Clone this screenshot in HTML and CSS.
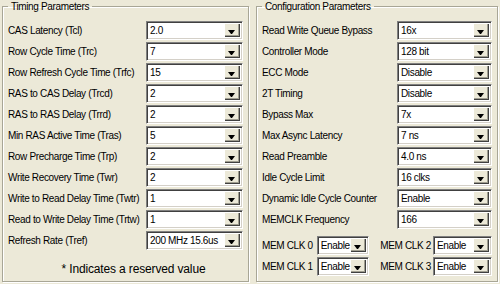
FILE: index.html
```html
<!DOCTYPE html>
<html lang="en">
<head>
  <meta charset="UTF-8">
  <title>Memory Settings</title>
  <link rel="stylesheet" href="styles.css">
</head>
<body>
  <div class="dialogo">
    <fieldset class="grupo grupo-timing">
      <legend>Timing Parameters</legend>
      <div class="fila"><span>CAS Latency (Tcl)</span><div class="combo"><span class="valor">2.0</span><span class="boton"></span></div></div>
      <div class="fila"><span>Row Cycle Time (Trc)</span><div class="combo"><span class="valor">7</span><span class="boton"></span></div></div>
      <div class="fila"><span>Row Refresh Cycle Time (Trfc)</span><div class="combo"><span class="valor">15</span><span class="boton"></span></div></div>
      <div class="fila"><span>RAS to CAS Delay (Trcd)</span><div class="combo"><span class="valor">2</span><span class="boton"></span></div></div>
      <div class="fila"><span>RAS to RAS Delay (Trrd)</span><div class="combo"><span class="valor">2</span><span class="boton"></span></div></div>
      <div class="fila"><span>Min RAS Active Time (Tras)</span><div class="combo"><span class="valor">5</span><span class="boton"></span></div></div>
      <div class="fila"><span>Row Precharge Time (Trp)</span><div class="combo"><span class="valor">2</span><span class="boton"></span></div></div>
      <div class="fila"><span>Write Recovery Time (Twr)</span><div class="combo"><span class="valor">2</span><span class="boton"></span></div></div>
      <div class="fila"><span>Write to Read Delay Time (Twtr)</span><div class="combo"><span class="valor">1</span><span class="boton"></span></div></div>
      <div class="fila"><span>Read to Write Delay Time (Trtw)</span><div class="combo"><span class="valor">1</span><span class="boton"></span></div></div>
      <div class="fila"><span>Refresh Rate (Tref)</span><div class="combo"><span class="valor">200 MHz 15.6us</span><span class="boton"></span></div></div>
      <p class="nota">* Indicates a reserved value</p>
    </fieldset>

    <fieldset class="grupo grupo-config">
      <legend>Configuration Parameters</legend>
      <div class="fila"><span>Read Write Queue Bypass</span><div class="combo"><span class="valor">16x</span><span class="boton"></span></div></div>
      <div class="fila"><span>Controller Mode</span><div class="combo"><span class="valor">128 bit</span><span class="boton"></span></div></div>
      <div class="fila"><span>ECC Mode</span><div class="combo"><span class="valor">Disable</span><span class="boton"></span></div></div>
      <div class="fila"><span>2T Timing</span><div class="combo"><span class="valor">Disable</span><span class="boton"></span></div></div>
      <div class="fila"><span>Bypass Max</span><div class="combo"><span class="valor">7x</span><span class="boton"></span></div></div>
      <div class="fila"><span>Max Async Latency</span><div class="combo"><span class="valor">7 ns</span><span class="boton"></span></div></div>
      <div class="fila"><span>Read Preamble</span><div class="combo"><span class="valor">4.0 ns</span><span class="boton"></span></div></div>
      <div class="fila"><span>Idle Cycle Limit</span><div class="combo"><span class="valor">16 clks</span><span class="boton"></span></div></div>
      <div class="fila"><span>Dynamic Idle Cycle Counter</span><div class="combo"><span class="valor">Enable</span><span class="boton"></span></div></div>
      <div class="fila"><span>MEMCLK Frequency</span><div class="combo"><span class="valor">166</span><span class="boton"></span></div></div>

      <div class="relojes">
        <div class="reloj"><span>MEM CLK 0</span><div class="combo"><span class="valor">Enable</span><span class="boton"></span></div></div>
        <div class="reloj"><span>MEM CLK 2</span><div class="combo"><span class="valor">Enable</span><span class="boton"></span></div></div>
        <div class="reloj"><span>MEM CLK 1</span><div class="combo"><span class="valor">Enable</span><span class="boton"></span></div></div>
        <div class="reloj"><span>MEM CLK 3</span><div class="combo"><span class="valor">Enable</span><span class="boton"></span></div></div>
      </div>
    </fieldset>
  </div>
</body>
</html>
```

FILE: styles.css
```css
body {
  margin: 0;
  background-color: #ece9d8;
  font-family: "Liberation Sans", Arial, sans-serif;
  font-size: 10px;
  letter-spacing: -0.35px;
  color: #000;
}

.dialogo {
  display: flex;
  gap: 7px;
  padding-left: 2px;
  width: 496px;
  height: 284px;
}

/* group boxes */
.grupo {
  margin: 0;
  padding: 8px 5px 0 5px;
  border: 1px solid #a8a696;
  box-shadow: 1px 1px 0 #fff, inset 1px 1px 0 #fff;
  box-sizing: border-box;
}

.grupo legend {
  padding: 0 3px;
  line-height: 13px;
}

.grupo-timing {
  width: 247px;
  height: 282px;
}

.grupo-config {
  width: 242px;
  height: 282px;
}

.fila {
  display: flex;
  justify-content: space-between;
  align-items: center;
  height: 19px;
  margin-bottom: 2px;
  white-space: nowrap;
}

.grupo-timing .combo {
  width: 97px;
}

.grupo-config .combo {
  width: 95px;
}

/* combo box */
.combo {
  display: flex;
  height: 19px;
  box-sizing: border-box;
  background: #fff;
  border-top: 1px solid #808080;
  border-left: 1px solid #808080;
  border-right: 1px solid #fff;
  border-bottom: 1px solid #fff;
  box-shadow: inset 1px 1px 0 #404040, inset -1px -1px 0 #d4d0c8;
}

.valor {
  flex: 1;
  padding: 3px 0 0 3px;
  line-height: 12px;
  white-space: nowrap;
  overflow: hidden;
}

.boton {
  position: relative;
  width: 15px;
  margin: 2px 2px 2px 0;
  background: #ece9d8;
  border-right: 1px solid #404040;
  border-bottom: 1px solid #404040;
  box-shadow: inset -1px -1px 0 #a09e90;
  box-sizing: border-box;
}

/* flecha del combo */
.boton::after {
  content: "";
  position: absolute;
  left: 3px;
  top: 6px;
  width: 1px;
  border-left: 3px solid transparent;
  border-right: 3px solid transparent;
  border-top: 4px solid #000;
}

.nota {
  margin: 12px 0 0 0;
  padding-left: 16px;
  text-align: center;
  font-size: 12px;
  letter-spacing: -0.15px;
  line-height: 14px;
}

.relojes {
  display: grid;
  grid-template-columns: auto auto;
  justify-content: space-between;
  row-gap: 2px;
  margin-top: 7px;
}

.reloj {
  display: flex;
  align-items: center;
  gap: 4px;
  height: 19px;
  white-space: nowrap;
}

.reloj .combo {
  width: 52px;
}

.reloj:nth-child(even) {
  gap: 2px;
}

.reloj:nth-child(even) .combo {
  width: 59px;
}
```
